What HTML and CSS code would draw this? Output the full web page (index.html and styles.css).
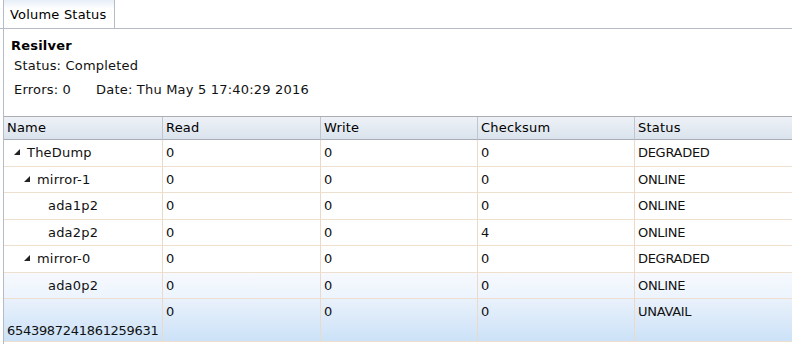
FILE: index.html
```html
<!DOCTYPE html>
<html lang="en">
<head>
    <meta charset="UTF-8">
    <title>Volume Status</title>
    <link rel="stylesheet" href="styles.css">
</head>
<body>
    <div class="tabs">
        <div class="tabstrip">
            <div class="tab">Volume Status</div>
        </div>
        <div class="pane">
            <div class="resilver">
                <h3>Resilver</h3>
                <div class="info">Status: Completed</div>
                <div class="info info-row">
                    <span>Errors: 0</span>
                    <span>Date: Thu May 5 17:40:29 2016</span>
                </div>
            </div>
            <table class="grid">
                <thead>
                    <tr>
                        <th class="c-name">Name</th>
                        <th class="c-read">Read</th>
                        <th class="c-write">Write</th>
                        <th class="c-sum">Checksum</th>
                        <th class="c-status">Status</th>
                    </tr>
                </thead>
                <tbody>
                    <tr>
                        <td><span class="indent l0"></span><span class="expander open"></span>TheDump</td>
                        <td>0</td><td>0</td><td>0</td><td>DEGRADED</td>
                    </tr>
                    <tr>
                        <td><span class="indent l1"></span><span class="expander open"></span>mirror-1</td>
                        <td>0</td><td>0</td><td>0</td><td>ONLINE</td>
                    </tr>
                    <tr>
                        <td><span class="indent l2"></span><span class="expander"></span>ada1p2</td>
                        <td>0</td><td>0</td><td>0</td><td>ONLINE</td>
                    </tr>
                    <tr>
                        <td><span class="indent l2"></span><span class="expander"></span>ada2p2</td>
                        <td>0</td><td>0</td><td>4</td><td>ONLINE</td>
                    </tr>
                    <tr>
                        <td><span class="indent l1"></span><span class="expander open"></span>mirror-0</td>
                        <td>0</td><td>0</td><td>0</td><td>DEGRADED</td>
                    </tr>
                    <tr class="hover">
                        <td><span class="indent l2"></span><span class="expander"></span>ada0p2</td>
                        <td>0</td><td>0</td><td>0</td><td>ONLINE</td>
                    </tr>
                    <tr class="selected">
                        <td><span class="indent l2"></span><span class="expander"></span><span class="guid">6543987241861259631</span></td>
                        <td>0</td><td>0</td><td>0</td><td>UNAVAIL</td>
                    </tr>
                </tbody>
            </table>
        </div>
    </div>
</body>
</html>
```

FILE: styles.css
```css
body {
    margin: 0;
    padding: 0;
    background-color: #fff;
    font-family: "DejaVu Sans", Verdana, sans-serif;
    font-size: 13px;
    letter-spacing: 0.2px;
    color: #111;
    overflow: hidden;
}

.tabstrip {
    display: flex;
    padding-left: 3px;
    border-bottom: 1px solid #b5bcc7;
    height: 28px;
}

.tab {
    width: 112px;
    height: 28px;
    margin-bottom: -1px;
    padding-left: 6px;
    box-sizing: border-box;
    line-height: 29px;
    border: 1px solid #b5bcc7;
    border-top: none;
    border-bottom: none;
    background: linear-gradient(#e6eef8 0px, #fff 9px, #fff 100%);
    color: #000;
    white-space: nowrap;
}

.pane {
    margin-left: 3px;
    border-left: 1px solid #b5bcc7;
    overflow: hidden;
    height: 320px;
}

.resilver {
    padding: 9px 0 0 7px;
    height: 87px;
    box-sizing: border-box;
}

.resilver h3 {
    margin: 0;
    font-size: 13px;
    font-weight: bold;
    line-height: 16px;
    color: #000;
}

.info {
    margin-left: 3px;
    margin-top: 4px;
    line-height: 16px;
}

.info-row {
    margin-top: 8px;
    display: flex;
    gap: 25px;
}

.grid {
    width: 900px;
    table-layout: fixed;
    border-collapse: separate;
    border-spacing: 0;
    border-top: 1px solid #a9aeb4;
}

.grid th,
.grid td {
    box-sizing: border-box;
    text-align: left;
    padding: 3px 4px 3px 3px;
    line-height: 19px;
    vertical-align: top;
    border-right: 1px solid #ecdac8;
    border-bottom: 1px solid #efdfcf;
}

.grid th {
    font-weight: normal;
    color: #000;
    height: 23px;
    padding-top: 1px;
    padding-bottom: 1px;
    background: linear-gradient(#eef2f7, #dae3ed);
    border-right: 1px solid #c1c6cc;
    border-bottom: 1px solid #a9aeb4;
}

.c-name { width: 159px; }
.c-read { width: 158px; }
.c-write { width: 157px; }
.c-sum { width: 157px; }
.c-status { width: 269px; }

.grid tbody tr td {
    height: 26.5px;
}

.grid td:nth-child(5) {
    letter-spacing: -0.3px;
}

.guid {
    letter-spacing: -0.3px;
}

.indent {
    display: inline-block;
    height: 1px;
}

.indent.l0 { width: 0; }
.indent.l1 { width: 10px; }
.indent.l2 { width: 21px; }

.expander {
    display: inline-block;
    width: 20px;
    height: 10px;
    position: relative;
}

.expander.open::after {
    content: "";
    position: absolute;
    left: 7px;
    top: 2px;
    border-left: 6px solid transparent;
    border-bottom: 6px solid #222;
}

.grid tr.hover td {
    background: linear-gradient(#f6f9fe, #edf4fd);
}

.grid tr.selected td {
    padding-bottom: 1px;
    background: linear-gradient(#e9f1fb, #cce2f8);
}
```
